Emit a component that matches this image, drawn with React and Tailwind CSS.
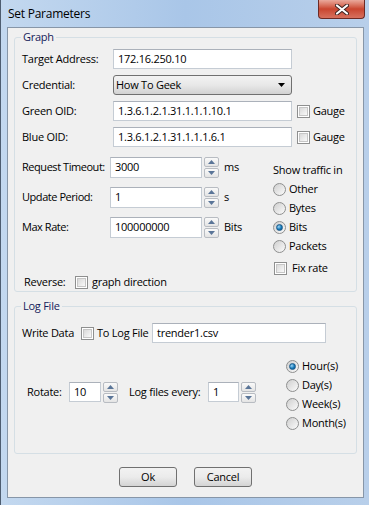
import React from "react";

function Field({ w, value, className = "" }) {
  return (
    <div
      className={`h-[20px] flex items-center bg-white border border-[#c5ccd4] border-t-[#abb1ba] pl-[4px] ${className}`}
      style={{ width: w }}
    >
      {value}
    </div>
  );
}

function Arrow({ up }) {
  return (
    <svg width="7" height="4" viewBox="0 0 7 4">
      <path d={up ? "M0 4L3.5 0L7 4Z" : "M0 0L3.5 4L7 0Z"} fill="#5a7598" />
    </svg>
  );
}

function Spin() {
  return (
    <div className="flex flex-col gap-px ml-[2px]">
      <div className="w-[15px] h-[10px] border border-[#b8bcc2] rounded-[2px] bg-gradient-to-b from-[#fafafa] to-[#e4e4e4] flex items-center justify-center">
        <Arrow up />
      </div>
      <div className="w-[15px] h-[10px] border border-[#b8bcc2] rounded-[2px] bg-gradient-to-b from-[#fafafa] to-[#e4e4e4] flex items-center justify-center">
        <Arrow />
      </div>
    </div>
  );
}

function Check() {
  return (
    <div className="w-[13px] h-[13px] border border-[#8e8f8f] bg-white p-px shrink-0">
      <div className="w-full h-full border border-[#c6c6c6] bg-gradient-to-br from-[#d9d9d9] to-[#f9f9f9]" />
    </div>
  );
}

function Radio({ on }) {
  return (
    <div className="w-[13px] h-[13px] rounded-full border border-[#8e8f8f] bg-gradient-to-br from-[#cfcfcf] to-[#fbfbfb] flex items-center justify-center shrink-0">
      {on && (
        <div className="w-[7px] h-[7px] rounded-full bg-[radial-gradient(circle_at_35%_35%,#9fd6f7,#1479b8_55%,#0b4f86)] border border-[#1b5a8a]" />
      )}
    </div>
  );
}

function RadioRow({ label, on }) {
  return (
    <div className="h-[19px] flex items-center gap-[3px]">
      <Radio on={on} />
      <span>{label}</span>
    </div>
  );
}

function Group({ title, className, children }) {
  return (
    <fieldset className={`border border-[#d5dfe5] rounded-[3px] ${className}`}>
      <legend className="ml-[6px] px-[2px] leading-[16px] text-[#14205a]">{title}</legend>
      {children}
    </fieldset>
  );
}

export default function App() {
  return (
    <div className="w-[369px] h-[505px] overflow-hidden bg-gradient-to-r from-[#c3d8ef] via-[#a9c6e8] to-[#b8cfea] border-l border-[#4e5d70] font-['Open_Sans',sans-serif] text-[11px] tracking-[-0.25px] whitespace-nowrap text-black">
      <div className="h-[27px] flex items-start justify-between">
        <div className="pl-[7px] pt-[6px] text-[12px] leading-[16px]">Set Parameters</div>
        <div className="mr-[4px] w-[47px] h-[19px] rounded-b-[4px] border border-t-0 border-[#6d2a24] bg-gradient-to-b from-[#e9a99c] via-[#c9452f] to-[#d7705e] flex items-center justify-center">
          <svg width="14" height="11" viewBox="0 0 14 11">
            <path d="M2 1.5L12 9.5M12 1.5L2 9.5" stroke="#3b2220" strokeWidth="4" strokeLinecap="round" />
            <path d="M2 1.5L12 9.5M12 1.5L2 9.5" stroke="#fff" strokeWidth="2.2" strokeLinecap="round" />
          </svg>
        </div>
      </div>

      <div className="ml-[6px] w-[357px] h-[471px] border border-[#8796a8] bg-[#f0f0f0] pt-px">
        <Group title="Graph" className="ml-[6px] w-[343px] h-[263px]">
          <div className="pt-[4px] pl-[7px]">
            <div className="h-[20px] flex items-center">
              <span className="w-[91px]">Target Address:</span>
              <Field w={179} value="172.16.250.10" />
            </div>
            <div className="mt-[6px] h-[20px] flex items-center">
              <span className="w-[91px]">Credential:</span>
              <div className="w-[179px] h-[20px] rounded-[3px] border border-[#707070] bg-gradient-to-b from-[#f3f3f3] via-[#e8e8e8] to-[#d2d2d2] flex items-center justify-between pl-[2px] pr-[6px]">
                <span>How To Geek</span>
                <svg width="7" height="4" viewBox="0 0 7 4">
                  <path d="M0 0L3.5 4L7 0Z" fill="#000" />
                </svg>
              </div>
            </div>
            <div className="mt-[6px] h-[20px] flex items-center">
              <span className="w-[91px]">Green OID:</span>
              <Field w={179} value="1.3.6.1.2.1.31.1.1.1.10.1" />
              <div className="ml-[5px]"><Check /></div>
              <span className="ml-[3px]">Gauge</span>
            </div>
            <div className="mt-[6px] h-[20px] flex items-center">
              <span className="w-[91px]">Blue OID:</span>
              <Field w={179} value="1.3.6.1.2.1.31.1.1.1.6.1" />
              <div className="ml-[5px]"><Check /></div>
              <span className="ml-[3px]">Gauge</span>
            </div>

            <div className="mt-[10px] flex">
              <div className="w-[251px]">
                {[
                  ["Request Timeout:", "3000", "ms"],
                  ["Update Period:", "1", "s"],
                  ["Max Rate:", "100000000", "Bits"],
                ].map(([l, v, u], i) => (
                  <div key={l} className={`h-[21px] flex items-center ${i ? "mt-[9px]" : ""}`}>
                    <span className="w-[88px] tracking-[-0.45px]">{l}</span>
                    <div className="h-[21px] w-[92px] flex items-center bg-white border border-[#c5ccd4] border-t-[#abb1ba] pl-[4px]">{v}</div>
                    <Spin />
                    <span className="ml-[5px]">{u}</span>
                  </div>
                ))}
                <div className="mt-[36px] h-[16px] flex items-center pl-[2px]">
                  <span className="w-[51px]">Reverse:</span>
                  <Check />
                  <span className="ml-[4px]">graph direction</span>
                </div>
              </div>
              <div>
                <div className="mt-[5px] leading-[16px]">Show traffic in</div>
                <div className="mt-[2px]">
                  <RadioRow label="Other" />
                  <RadioRow label="Bytes" />
                  <RadioRow label="Bits" on />
                  <RadioRow label="Packets" />
                </div>
                <div className="mt-[3px] h-[19px] flex items-center gap-[5px] pl-px">
                  <Check />
                  <span>Fix rate</span>
                </div>
              </div>
            </div>
          </div>
        </Group>

        <Group title="Log File" className="mt-[6px] ml-[6px] w-[343px] h-[156px]">
          <div className="pt-[9px] pl-[7px]">
            <div className="h-[20px] flex items-center">
              <span className="w-[59px]">Write Data</span>
              <Check />
              <span className="ml-[3px] w-[55px]">To Log File</span>
              <Field w={174} value="trender1.csv" />
            </div>
            <div className="flex items-start">
              <div className="w-[264px] mt-[39px] h-[20px] flex items-center pl-[5px]">
                <span className="w-[42px]">Rotate:</span>
                <Field w={32} value="10" />
                <Spin />
                <span className="ml-[11px] w-[79px]">Log files every:</span>
                <Field w={31} value="1" />
                <Spin />
              </div>
              <div className="mt-[14px]">
                <RadioRow label="Hour(s)" on />
                <RadioRow label="Day(s)" />
                <RadioRow label="Week(s)" />
                <RadioRow label="Month(s)" />
              </div>
            </div>
          </div>
        </Group>

        <div className="mt-[13px] flex justify-center gap-[17px]">
          {["Ok", "Cancel"].map((b) => (
            <div
              key={b}
              className="w-[58px] h-[20px] rounded-[3px] border border-[#707070] bg-gradient-to-b from-[#f2f2f2] via-[#ebebeb] to-[#d4d4d4] flex items-center justify-center"
            >
              {b}
            </div>
          ))}
        </div>
      </div>
    </div>
  );
}
